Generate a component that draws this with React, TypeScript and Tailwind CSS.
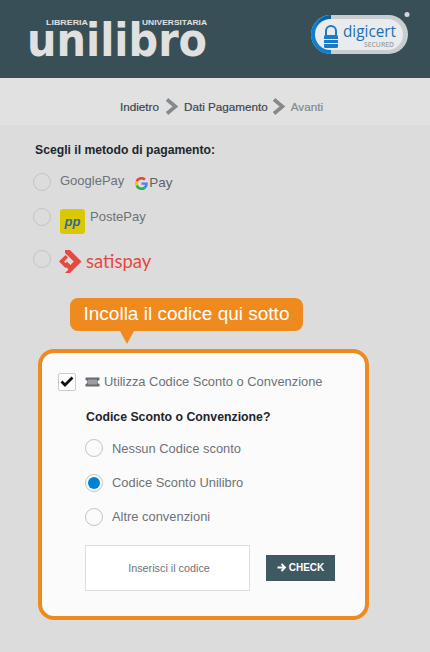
function Radio({ checked = false }: { checked?: boolean }) {
    return (
        <span className="flex h-[18px] w-[18px] shrink-0 items-center justify-center rounded-full border border-[#c4c4c4] bg-transparent">
            {checked && <span className="h-3 w-3 rounded-full bg-[#0083d6]" />}
        </span>
    )
}

function Chevron({ className = "" }: { className?: string }) {
    return (
        <svg width="13" height="17" viewBox="0 0 13 17" className={`shrink-0 ${className}`}>
            <path d="M2 1.5 L10.5 8.5 L2 15.5" fill="none" stroke="#85898c" strokeWidth="3.6" />
        </svg>
    )
}

function UnilibroLogo() {
    return (
        <svg width="182" height="48" viewBox="0 0 182 48" className="block overflow-visible">
            <text x="19" y="12" fontFamily="Liberation Sans, sans-serif" fontSize="7.5" fontWeight="700" fill="#e0e0e0" textLength="42" lengthAdjust="spacingAndGlyphs">LIBRERIA</text>
            <text x="115" y="12" fontFamily="Liberation Sans, sans-serif" fontSize="7.5" fontWeight="700" fill="#e0e0e0" textLength="65" lengthAdjust="spacingAndGlyphs">UNIVERSITARIA</text>
            <text x="0" y="43" fontFamily="DejaVu Sans, sans-serif" fontSize="46" fontWeight="700" fill="#e0e0e0" textLength="180" lengthAdjust="spacingAndGlyphs">unilibro</text>
        </svg>
    )
}

function DigicertBadge() {
    return (
        <svg width="102" height="44" viewBox="0 0 102 44" className="block">
            <rect x="0" y="4" width="97" height="39" rx="19.5" fill="#c9cdd0" />
            <path d="M19.5 4 H20 V43 H19.5 A19.5 19.5 0 0 1 19.5 4 Z" fill="#0f7dd0" />
            <path d="M19.5 4 H20 V8 A16 16 0 0 0 5 15 A19.5 19.5 0 0 1 19.5 4 Z" fill="#0b5e9e" />
            <rect x="4" y="8" width="88" height="31" rx="15.5" fill="#e9ebec" />
            <path d="M15 24 V20 A5 5 0 0 1 25 20 V24" fill="none" stroke="#1a7cc9" strokeWidth="2" />
            <rect x="13" y="24" width="14" height="13" rx="1.5" fill="#1a7cc9" />
            <rect x="13" y="28" width="14" height="1" fill="#e9ebec" />
            <rect x="13" y="32" width="14" height="1" fill="#e9ebec" />
            <text x="32" y="26" fontFamily="Open Sans, sans-serif" fontSize="17" fill="#1a6fb5" textLength="53" lengthAdjust="spacingAndGlyphs">digicert</text>
            <text x="53" y="36" fontFamily="Open Sans, sans-serif" fontSize="6.5" fontWeight="600" fill="#9ba1a5" textLength="30" lengthAdjust="spacingAndGlyphs">SECURED</text>
            <circle cx="96" cy="3.5" r="2.5" fill="#d5d8da" />
        </svg>
    )
}

function GoogleG() {
    return (
        <svg width="13" height="13" viewBox="0 0 48 48" className="shrink-0">
            <path fill="#ea4335" d="M24 9.5c3.5 0 6.700 1.200 9.200 3.600l6.900-6.900C35.900 2.400 30.500 0 24 0 14.600 0 6.500 5.400 2.600 13.200l8 6.200C12.500 13.600 17.800 9.500 24 9.500z" />
            <path fill="#4285f4" d="M47 24.500c0-1.600-.1-3.100-.4-4.500H24v9h13c-.6 3-2.300 5.500-4.800 7.200l7.700 6C44.400 37.900 47 31.800 47 24.500z" />
            <path fill="#fbbc05" d="M10.600 28.600A14.500 14.500 0 0 1 10.600 19.400l-8-6.200a24 24 0 0 0 0 21.600l8-6.200z" />
            <path fill="#34a853" d="M24 48c6.500 0 11.900-2.100 15.900-5.800l-7.700-6c-2.200 1.500-4.900 2.300-8.200 2.300-6.200 0-11.500-4.100-13.400-9.900l-8 6.200C6.500 42.600 14.600 48 24 48z" />
        </svg>
    )
}

function SatispayMark() {
    return (
        <svg width="23" height="23" viewBox="0 0 23 23" className="shrink-0">
            <path d="M6 0 H11 L22.500 11.500 L11 23 H6 L9.500 19.500 L5.500 15.500 L5 15.500 L8 11.800 L11.500 15 L14.800 11.500 L6 3 Z" fill="#e5493f" />
            <path d="M6.500 5 L0 11.500 L6.500 18 L9 15.500 L5 11.500 L9 7.500 Z" fill="#e5493f" />
        </svg>
    )
}

export default function App() {
    return (
        <div className="min-h-[652px] bg-[#dcdcdc] font-['Liberation_Sans',Arial,sans-serif]">
            <header className="flex h-[78px] items-start justify-between bg-[#384f57] pl-[27px] pr-[17px] pt-[13px]">
                <UnilibroLogo />
                <div className="-mt-[2px]">
                    <DigicertBadge />
                </div>
            </header>

            <nav className="flex h-[47px] items-center justify-center gap-[6px] bg-[#e1e1e1] pl-[13px] pt-[10px] text-[11.7px] text-[#3b4650] [-webkit-text-stroke:0.2px]">
                <span>Indietro</span>
                <Chevron />
                <span>Dati Pagamento</span>
                <Chevron className="-ml-[2px]" />
                <span className="text-[#85898c]">Avanti</span>
            </nav>

            <main className="px-[33px] pt-[17px]">
                <h2 className="pl-[2px] text-[12.2px] font-bold leading-4 text-[#20262c]">
                    Scegli il metodo di pagamento:
                </h2>

                <div className="mt-3 flex items-center">
                    <Radio />
                    <span className="ml-[9px] -mt-[2px] text-[13px] text-[#6d7278]">GooglePay</span>
                    <span className="ml-[11px] flex items-center gap-[1px] pt-[3px]">
                        <GoogleG />
                        <span className="text-[13.5px] text-[#5f6368]">Pay</span>
                    </span>
                </div>

                <div className="mt-[15px] flex items-start">
                    <Radio />
                    <span className="ml-[9px] mt-[1px] flex h-[25px] w-[25px] items-center justify-center rounded-[3px] bg-[#dcc800] pb-[1px] text-[13px] font-bold italic text-[#2d6aa0]">
                        pp
                    </span>
                    <span className="ml-[5px] mt-[1px] text-[13px] leading-4 text-[#6d7278]">PostePay</span>
                </div>

                <div className="mt-4 flex items-start">
                    <Radio />
                    <span className="ml-2">
                        <SatispayMark />
                    </span>
                    <span className="ml-[4px] font-['Lato',sans-serif] text-[18.5px] leading-[22px] text-[#e5493f]">satispay</span>
                </div>

                <div className="relative ml-[37px] mt-[25px] h-[33px] w-[233px] rounded-lg bg-[#ef8a1f] text-center text-[19px] leading-[32px] text-white">
                    Incolla il codice qui sotto
                    <span className="absolute left-[50px] top-[33px] h-0 w-0 border-x-[7px] border-t-[13px] border-x-transparent border-t-[#ef8a1f]" />
                </div>

                <section className="ml-[5px] mt-[18px] h-[271px] w-[331px] rounded-2xl border-4 border-[#ef8a1f] bg-[#fbfbfb] pl-4 pt-[19px]">
                    <div className="flex items-center">
                        <span className="flex h-[18px] w-[18px] items-center justify-center rounded-[2px] border border-[#cccccc] bg-white">
                            <svg width="14" height="11" viewBox="0 0 14 11">
                                <path d="M1.500 5.500 L5 9 L12.500 1.500" fill="none" stroke="#111" strokeWidth="2.800" />
                            </svg>
                        </span>
                        <svg width="15" height="10" viewBox="0 0 15 10" className="ml-[9px] shrink-0">
                            <path d="M0.500 0.500 H14.500 V3 A2 2 0 0 0 14.500 7 V9.500 H0.500 V7 A2 2 0 0 0 0.500 3 Z" fill="#666b70" />
                            <rect x="3" y="2.500" width="9" height="5" fill="#9a9ea2" />
                        </svg>
                        <span className="ml-[4px] text-[12.9px] text-[#6d7278]">Utilizza Codice Sconto o Convenzione</span>
                    </div>

                    <div className="pl-[27px]">
                        <h3 className="mt-[17px] pl-[1px] text-[12.3px] font-bold leading-4 text-[#20262c]">
                            Codice Sconto o Convenzione?
                        </h3>

                        <div className="mt-[14px] flex flex-col gap-[15px] text-[#6d7278]">
                            <label className="flex items-center gap-[9px] text-[12.9px]"><Radio /><span>Nessun Codice sconto</span></label>
                            <label className="flex items-center gap-[9px] text-[12.9px]"><Radio checked /><span>Codice Sconto Unilibro</span></label>
                            <label className="flex items-center gap-[9px] text-[12.9px]"><Radio /><span>Altre convenzioni</span></label>
                        </div>

                        <div className="mt-[18px] flex items-center">
                            <div className="flex h-[46px] w-[165px] items-center justify-center border border-[#dddddd] bg-white pl-[3px] text-[10.8px] text-[#6d7278]">
                                Inserisci il codice
                            </div>
                            <button className="ml-4 flex h-[26px] w-[69px] items-center justify-center gap-[2px] bg-[#3f5963] text-[10px] font-bold text-white">
                                <svg width="10" height="9" viewBox="0 0 10 9">
                                    <path d="M0.500 4.500 H8 M4.500 1 L8 4.500 L4.500 8" fill="none" stroke="#fff" strokeWidth="1.800" />
                                </svg>
                                CHECK
                            </button>
                        </div>
                    </div>
                </section>
            </main>
        </div>
    )
}
